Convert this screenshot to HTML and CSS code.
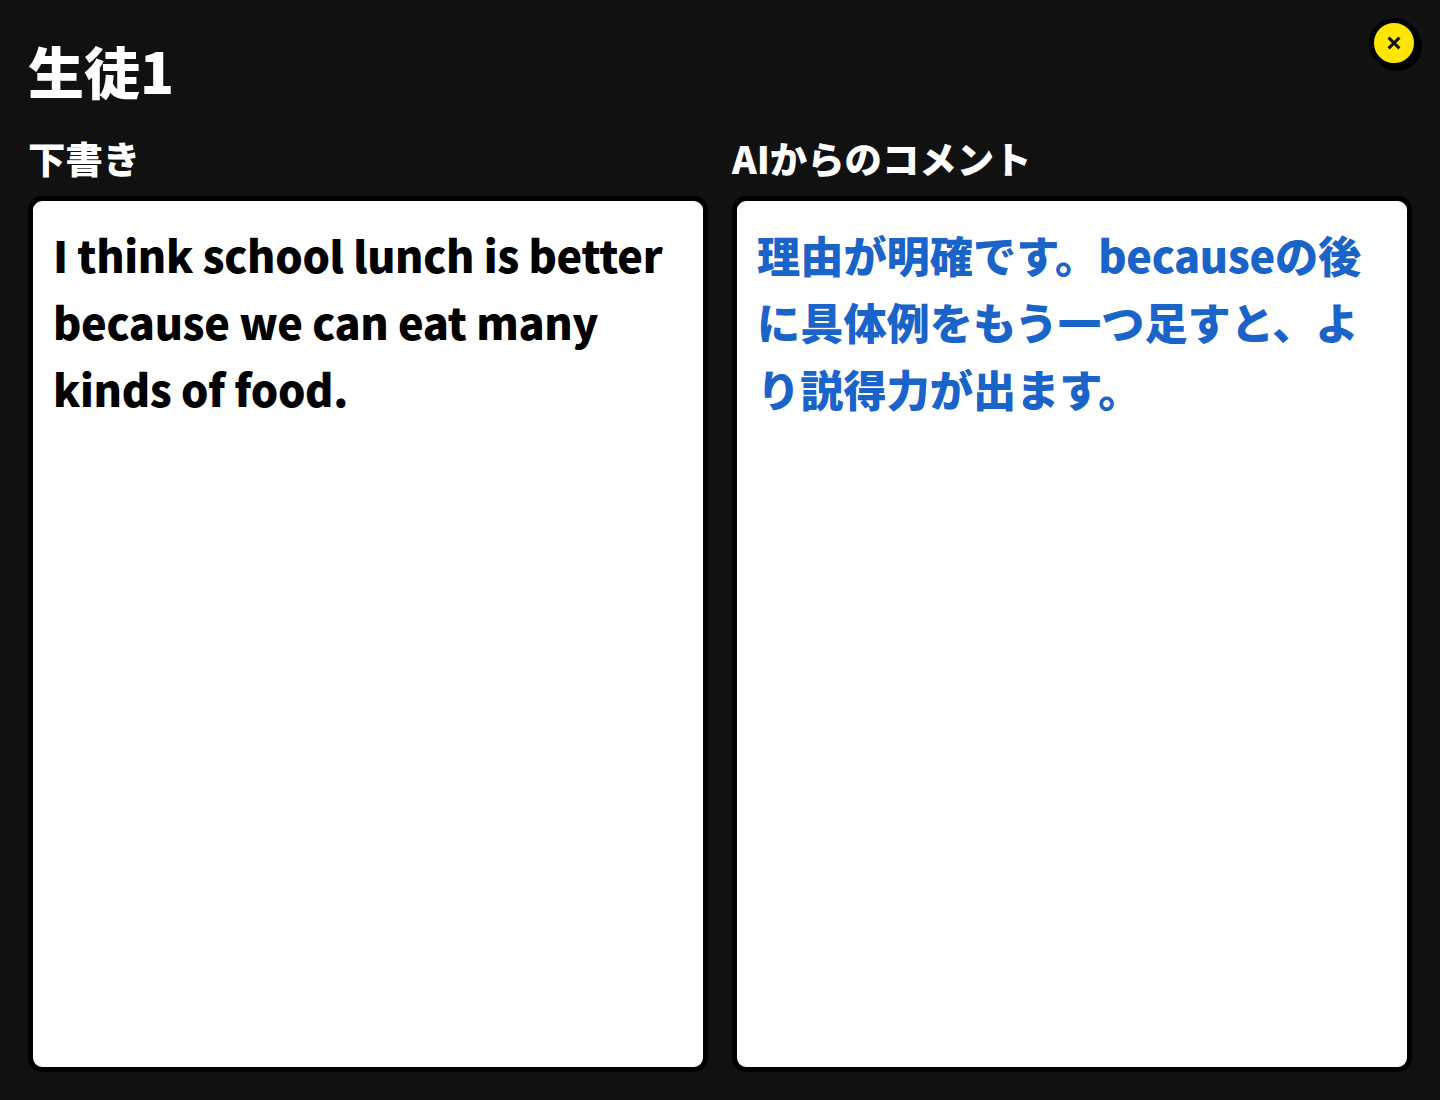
FILE: index.html
```html
<!DOCTYPE html>
<html lang="ja">
<head>
<meta charset="utf-8">
<title>生徒1</title>
<link rel="stylesheet" href="styles.css">
</head>
<body>
<main class="modal">
  <button class="close" aria-label="閉じる">
    <svg class="close-icon" viewBox="0 0 16 16" width="16" height="16"><path d="M2.6 2.6l10.8 10.8M13.4 2.6l-10.800 10.800" fill="none" stroke="#111" stroke-width="2.9"/></svg>
  </button>
  <h1 class="title">生徒1</h1>
  <div class="columns">
    <section class="col">
      <h2 class="label">下書き</h2>
      <div class="card latin">I think school lunch is better because we can eat many kinds of food.</div>
    </section>
    <section class="col">
      <h2 class="label">AIからのコメント</h2>
      <div class="card comment">理由が明確です。<span class="latin">because</span>の後に具体例をもう一つ足すと、より説得力が出ます。</div>
    </section>
  </div>
</main>
</body>
</html>
```
FILE: styles.css
```css
* { box-sizing: border-box; }
html, body { margin: 0; height: 100%; }
body { background: #111; color: #fff; font-family: "Noto Sans CJK JP", sans-serif; }
.modal { position: relative; height: 1100px; padding: 28px; display: flex; flex-direction: column; }
.title { margin: 0 0 24px; font-size: 56px; font-weight: 900; line-height: 84px; height: 84px; }
.columns { flex: 1; display: grid; grid-template-columns: 1fr 1fr; gap: 24px; min-height: 0; }
.col { display: flex; flex-direction: column; min-height: 0; }
.label { margin: 0 0 16px; font-size: 37.4px; font-weight: 900; line-height: 44px; }
.card { flex: 1; background: #fff; color: #000; border: 5px solid #000; border-radius: 14px; padding: 20px; font-size: 43.2px; font-weight: 900; line-height: 67px; }
.latin { letter-spacing: -0.33px; }
.comment { color: #1a63c9; }
.close { position: absolute; top: 18px; right: 21px; width: 50px; height: 50px; border-radius: 50%; border: 5px solid #000; box-shadow: 3px 3px 0 #000; background: #ffe600; padding: 0; display: flex; align-items: center; justify-content: center; }
```
